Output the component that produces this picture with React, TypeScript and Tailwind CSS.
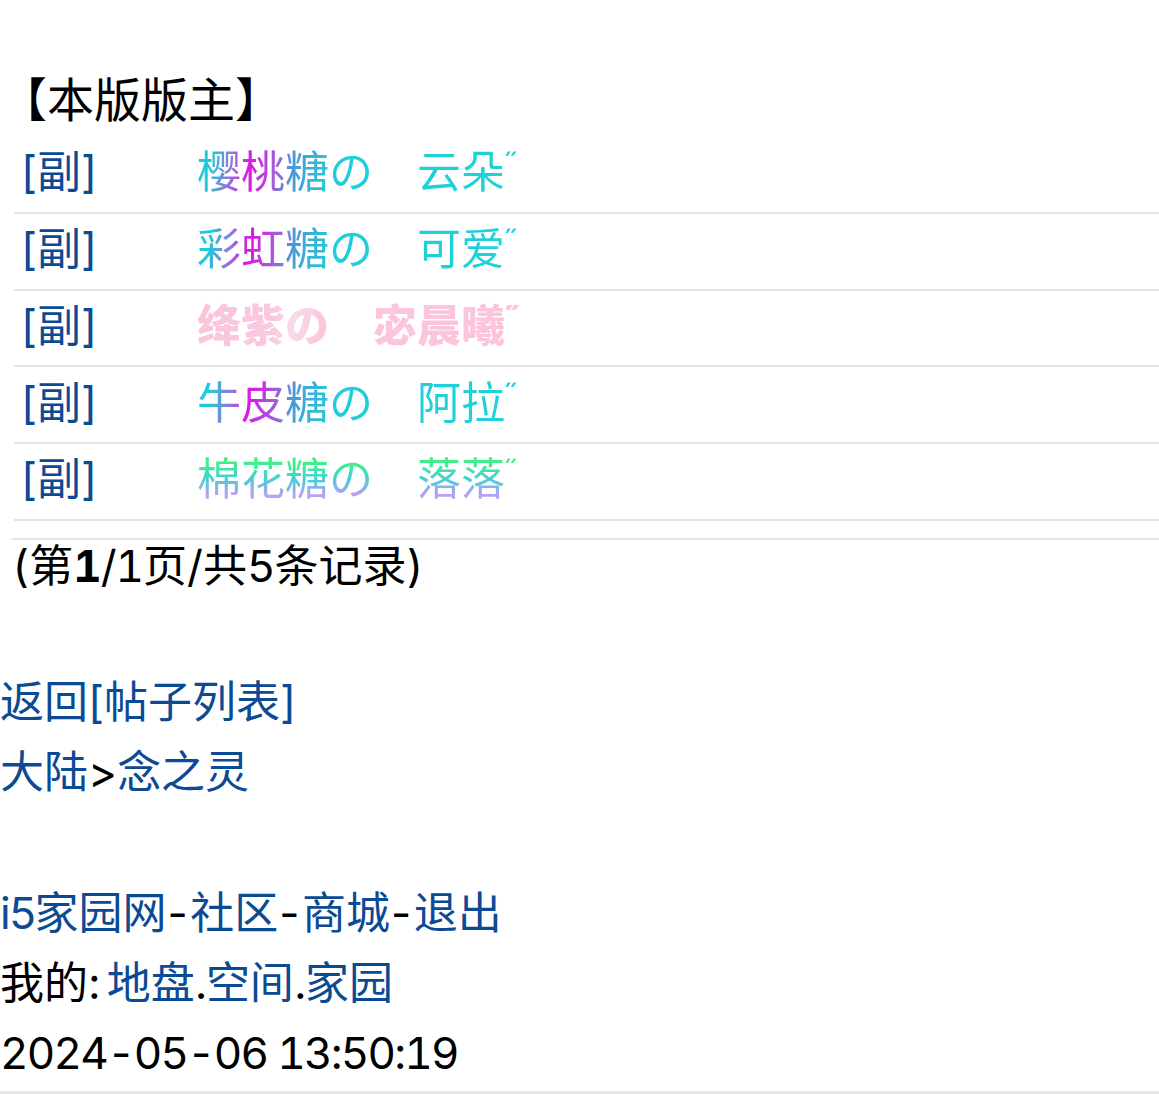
import React from 'react';

const font = "font-['Inter','Noto_Sans_CJK_SC',sans-serif]";

const mods = [
  { name: '樱桃糖の　云朵', cls: 'bg-[linear-gradient(100deg,#1ccfd8_0px,#22c8d8_18px,#8f78d8_38px,#e014e8_58px,#a060d8_84px,#4a9ad8_100px,#20cdd8_140px,#1ed3d8_330px)]' },
  { name: '彩虹糖の　可爱', cls: 'bg-[linear-gradient(100deg,#1ccfd8_0px,#22c8d8_18px,#8f78d8_38px,#e014e8_58px,#a060d8_84px,#4a9ad8_100px,#20cdd8_140px,#1ed3d8_330px)]' },
  { name: '绛紫の　宓晨曦', cls: 'bg-[linear-gradient(100deg,#fbc4dc_0px,#f9c8e0_80px,#f7dbe9_100px,#fbc6de_130px,#fbc4dc_330px)]', bold: true },
  { name: '牛皮糖の　阿拉', cls: 'bg-[linear-gradient(100deg,#1ccfd8_0px,#22c8d8_18px,#8f78d8_38px,#e014e8_58px,#a060d8_84px,#4a9ad8_100px,#20cdd8_140px,#1ed3d8_330px)]' },
  { name: '棉花糖の　落落', cls: 'bg-[linear-gradient(180deg,#3ff08a_28%,#45cfd8_50%,#b8a0f4_72%)]' },
];

const Link = ({ children }: { children: React.ReactNode }) => (
  <a className="text-[#0b4a94]">{children}</a>
);

const Dash = () => <span className="ml-[1px] tracking-[2.5px]">-</span>;

export default function App() {
  return (
    <div className={`${font} flex h-[1094px] flex-col overflow-hidden bg-white text-[44px] leading-[70px] text-black`}>
      <div className="pl-[14px] pt-[64px]">
        <div className="ml-[-14px] h-[73px] text-[47px] leading-[72px]">【本版版主】</div>
        {mods.map((m, i) => (
          <div key={i} className="flex h-[76.75px] items-center border-b-2 border-[#e5e5e5] pl-[7px] pb-[4px]">
            <a className="w-[176px] text-[#0b4a94]">[副]</a>
            <span className={`${m.cls} w-[340px] bg-clip-text text-transparent ${m.bold ? 'font-black' : ''}`}>
              {m.name}
              <span className="ml-[-2px] align-[12px] text-[32px] leading-none">˝</span>
            </span>
          </div>
        ))}
        <div className="mt-[17px] ml-[-2px] h-[56px] border-t-2 border-[#e5e5e5] leading-[52px] tabular-nums">
          (第<b className="tracking-[-1px]">1</b><span className="tracking-[-1px]">/1</span>页/共<span className="tracking-[-1px]">5</span>条记录)
        </div>
      </div>
      <div className="mt-[73px]">
        <div><Link>返回[帖子列表]</Link></div>
        <div><Link>大陆</Link>&gt;<Link>念之灵</Link></div>
        <div className="mt-[71.5px]">
          <Link><span className="tracking-[-1.5px]">i5</span>家园网</Link><Dash /><Link>社区</Link><Dash /><Link>商城</Link><Dash /><Link>退出</Link>
        </div>
        <div>
          我的<span className="tracking-[6px]">:</span><Link>地盘</Link><span className="tracking-[-1.5px]">.</span><Link>空间</Link><span className="tracking-[-1.5px]">.</span><Link>家园</Link>
        </div>
        <div className="tracking-[-1.8px] tabular-nums">2024-05-06 13:50:19</div>
      </div>
      <div className="mt-auto h-[3px] bg-[#e8e8e8]" />
    </div>
  );
}
